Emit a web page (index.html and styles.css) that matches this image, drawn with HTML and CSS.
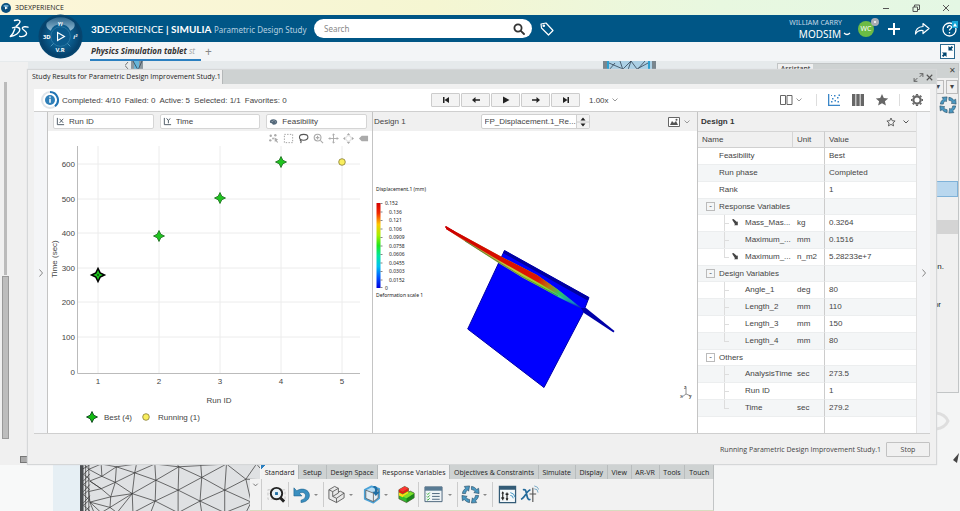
FILE: index.html
```html
<!DOCTYPE html>
<html lang="en">

<head>
    <meta charset="UTF-8">
    <meta name="viewport" content="width=device-width, initial-scale=1.0">
    <title>3DEXPERIENCE</title>
    <link rel="stylesheet" href="styles.css">
</head>

<body>
    <div class="titlebar">
        <svg class="app-icon" viewBox="0 0 10 10"><circle cx="5" cy="5" r="5" fill="#0b4f7d"/><path d="M2 3a4 4 0 0 1 6 0L5 5z" fill="#6aa9cf"/><path d="M4 3.500l3 1.500-3 1.500z" fill="#fff"/></svg>
        <span class="app-title">3DEXPERIENCE</span>
        <div class="window-buttons">
            <button aria-label="Minimize"><svg viewBox="0 0 10 10"><path d="M2 5.500h6"/></svg></button>
            <button aria-label="Restore"><svg viewBox="0 0 10 10"><path d="M2 4h4.500v4.500H2zM3.500 4V2h5v4.500h-2"/></svg></button>
            <button aria-label="Close"><svg viewBox="0 0 10 10"><path d="M2 2l6 6M8 2L2 8"/></svg></button>
        </div>
    </div>

    <header class="header">
        <svg class="ds-logo" viewBox="0 0 20 20" fill="none" stroke="#fff" stroke-width="1.400" stroke-linecap="round" stroke-linejoin="round">
            <path d="M5.500 1.500C8 .8 11 .8 11 2.400c0 1.800-1.800 3.200-3.800 4.800"/>
            <path d="M3.500 8.800c3.200-1.200 7.300-.8 7.300 2 0 3-4.500 6-9.500 6.700 2-1.800 3.700-4.700 4.600-7.700"/>
            <path d="M19 8.200c-2-.9-5.500-.6-5.700.9-.2 1.600 4.700 3 4.300 5.600-.3 2.300-4 3.500-7 2.600"/>
        </svg>
        <button class="compass" aria-label="Compass">
            <svg viewBox="0 0 46 46">
                <defs>
                    <radialGradient id="ball" cx="50%" cy="50%" r="52%"><stop offset="0" stop-color="#1b78a8"/><stop offset=".6" stop-color="#0a5888"/><stop offset="1" stop-color="#053d66"/></radialGradient>
                    <linearGradient id="cap" x1="0" y1="0" x2="0" y2="1"><stop offset="0" stop-color="#2c6489"/><stop offset="1" stop-color="#8db9d3"/></linearGradient>
                </defs>
                <circle cx="23" cy="23" r="22.500" fill="#06456f"/>
                <circle cx="23" cy="23" r="20.500" fill="url(#ball)"/>
                <path d="M9 9a20 20 0 0 1 28 0q2 5-4 8a11 11 0 0 0-20 0q-6-3-4-8z" fill="url(#cap)"/>
                <circle cx="23" cy="23" r="10" fill="#0a5a8c" stroke="#2e7ba6" stroke-width=".8"/>
                <path d="M13 33l3-3M33 33l-3-3" stroke="#4b94bb"/>
                <path d="M20 19l7 4-7 4z" fill="none" stroke="#fff" stroke-width="1.200"/>
                <text x="5" y="26">3D</text>
                <text x="18" y="39">V.R</text>
                <text x="36" y="26" font-style="italic">i&#178;</text>
                <text x="20" y="12" font-style="italic">Yi</text>
            </svg>
        </button>
        <div class="brand"><b>3D</b>EXPERIENCE <b>| SIMULIA</b> <span class="brand-app">Parametric Design Study</span></div>
        <div class="search">
            <input type="text" placeholder="Search" aria-label="Search">
            <button aria-label="Run search"><svg viewBox="0 0 12 12" fill="none" stroke="#333" stroke-width="1.800"><circle cx="5" cy="5" r="3.600"/><path d="M7.800 7.800L11 11" stroke-linecap="round"/></svg></button>
        </div>
        <button class="tag" aria-label="Tags"><svg viewBox="0 0 14 14" fill="none" stroke="#fff" stroke-width="1.200" stroke-linejoin="round"><path d="M1 2l5-1 7 7.500L8.500 13 1.500 6z"/><circle cx="3.800" cy="3.800" r=".7"/></svg></button>
        <div class="user">
            <span class="user-name">WILLIAM CARRY</span>
            <button class="user-space">MODSIM <svg viewBox="0 0 8 8" fill="none" stroke="#fff" stroke-width="1.200"><path d="M1 3q3 3 6 0"/></svg></button>
        </div>
        <div class="avatar">WC<i></i></div>
        <button class="head-btn" aria-label="Add"><svg viewBox="0 0 16 16" stroke="#fff" stroke-width="2"><path d="M8 2v12M2 8h12"/></svg></button>
        <button class="head-btn" aria-label="Share"><svg viewBox="0 0 16 16" fill="none" stroke="#fff" stroke-width="1.200" stroke-linejoin="round"><path d="M9 2.500l6 5-6 5V9.500C5.500 9 3 10.500 1.500 13 1.500 8.500 4.500 5.800 9 5.500z"/></svg></button>
        <button class="head-btn help" aria-label="Help"><svg viewBox="0 0 16 16" fill="none" stroke="#fff" stroke-width="1.300"><circle cx="7.500" cy="8.500" r="6.500"/><path d="M5.500 7c0-3 4-3 4-.7 0 1.500-2 1.500-2 3.200M7.500 11v1.500"/><path d="M10 0h6v7h-6z" fill="#18a7d8" stroke="none"/><path d="M13 2l2 3.500h-4z" fill="#fff" stroke="none"/></svg></button>
    </header>

    <nav class="tabrow">
        <a class="doc-tab" href="#">Physics Simulation tablet <span>st</span></a>
        <button class="add-tab" aria-label="New tab">+</button>
        <button class="shrink" aria-label="Reduce"><svg viewBox="0 0 14 14"><path d="M13 2.500L11.500 1 9.800 2.700 8 1v5h5l-1.700-1.800zM1 11.500L2.500 13l1.700-1.700L6 13V8H1l1.700 1.800z" fill="#00456f"/></svg></button>
    </nav>

    <main class="workspace">
        <!-- everything that shows behind the study window -->
        <div class="backdrop" aria-hidden="true">
            <div class="left-dock"><div class="scroll-track"></div><div class="scroll-thumb"></div><i class="grip"></i></div>
            <div class="left-view"></div>
            <svg class="strip-mesh strip-mesh-a" viewBox="0 0 18 9"><path d="M3 1L0 4.500 3 8" fill="none" stroke="#555" stroke-width=".8"/><path d="M6 0h12v9H6z" fill="#67b5d8"/><path d="M6 0h3v9H6zM14 0h4v9h-4z" fill="#8b979e"/><path d="M8 0l5 9 4-9" fill="none" stroke="#345" stroke-width=".8"/></svg>
            <svg class="strip-mesh" viewBox="0 0 53 9"><path d="M0 0h53v9H0z" fill="#acd0e5"/><path d="M0 0h4v9H0zM49 0h4v9h-4z" fill="#7a868e"/><path d="M4 0h2v9H4zM45 0h2v9h-2z" fill="#2c9fd0"/><path d="M6 2l14 6 8-8 6 8 11-6M6 9l6-7M20 9L17 0M28 0l-3 9M34 9l8-9" fill="none" stroke="#345" stroke-width=".8"/></svg>
            <svg class="mesh" viewBox="240 552 510 138" preserveAspectRatio="xMinYMin slice">
                <path d="M240 552h540v138H240z" fill="#dfe1e3"/>
                <path d="M240 552h10v138h-10z" fill="#4a4d50"/>
                <path d="M250 552l15 15-15 14 17 14-17 15 17 14-17 15 17 15-17 15 17 15-17 12M256 552v138M265 552v138M248 566l20-12M250 600l18-20M250 630l18-20M250 662l18-20M250 690l18-18" class="wire"/>
                <path d="M265 567L300 552 343 560 302 587 265 567M302 587L268 600 300 622 265 630M302 587L340 604 300 622 327 645 268 660 265 630M343 560L340 604 327 645 325 675 268 660M340 604L395 577 343 560 400 552 395 577 452 552 520 560 455 598 395 577 388 636 327 645M340 604L388 636 325 675 300 690 268 660 280 690M325 675L345 690 388 636 390 690M388 636L455 598 453 657 388 636M452 552L455 598 518 626 520 560 585 590 518 626 453 657 440 690M390 690L453 657 518 690 518 626 580 657 585 590 650 626 580 657 518 690M520 560L515 552M580 657L585 690M580 657L650 690 650 626 725 660 650 690M585 590L582 552M585 590L655 552 520 560M655 552L650 626 710 595 655 552M710 595L740 552 780 597 710 595 725 660 747 640M725 660l22 25M725 660l-15 30M725 660l22 0M725 660l5 30M300 552l2 35M300 622l-33-22" class="wire"/>
            </svg>
            <div class="assistant">
                <div class="assistant-bar"><span>Assistant</span><i>&#10005;</i></div>
                <div class="assistant-tools"><i>&#9662;</i><i>&#9662;</i></div>
                <svg class="cycle" viewBox="0 0 20 20"><use href="#cycle-arrows"/></svg>
                <div class="assistant-pick"></div>
                <div class="assistant-row"></div>
                <p>completion.</p>
                <p>or</p>
            </div>
            <svg class="corner-view" viewBox="0 0 24 60"><path d="M0 10q9 1 12 8-3 7-12 8" fill="none" stroke="#dedede" stroke-width="3"/><path d="M23 50l-6 7 4 3z" fill="#444"/></svg>
        </div>

        <section class="study">
            <div class="study-title">
                <h1>Study Results for Parametric Design Improvement Study.1</h1>
                <button aria-label="Maximize"><svg viewBox="0 0 10 10" fill="none" stroke="#555" stroke-width=".8"><path d="M6 1.500h3v3M9 1.500L6 4.500M4 8.500H1v-3M1 8.500l3-3"/></svg></button>
                <button aria-label="Close study"><svg viewBox="0 0 10 10" stroke="#555"><path d="M2.500 2.500l5 5M7.500 2.500l-5 5"/></svg></button>
            </div>

            <div class="study-bar">
                <div class="status">
                    <svg class="ring" viewBox="0 0 20 20"><circle cx="10" cy="10" r="8" fill="none" stroke="#dfe5ea" stroke-width="2"/><path d="M10 2a8 8 0 0 1 5 14.200" fill="none" stroke="#2074b4" stroke-width="2"/><circle cx="10" cy="10" r="5" fill="#2f7fb8"/><path d="M10 8.700v4M10 6.500v1.300" stroke="#fff" stroke-width="1.500"/></svg>
                    <span>Completed: 4/10</span><span>Failed: 0</span><span>Active: 5</span><span>Selected: 1/1</span><span>Favorites: 0</span>
                </div>
                <div class="player">
                    <button aria-label="First"><svg viewBox="0 0 10 10"><path d="M2 2h1.500v6H2zM8 2v6L3.500 5z"/></svg></button>
                    <button aria-label="Previous"><svg viewBox="0 0 10 10"><path d="M1 5l3.500-3v2.200H9v1.600H4.500V8z"/></svg></button>
                    <button aria-label="Play"><svg viewBox="0 0 10 10"><path d="M2 1.500L8.500 5 2 8.500z"/></svg></button>
                    <button aria-label="Next"><svg viewBox="0 0 10 10"><path d="M9 5L5.500 2v2.200H1v1.600h4.500V8z"/></svg></button>
                    <button aria-label="Last"><svg viewBox="0 0 10 10"><path d="M8 2H6.500v6H8zM2 2v6l4.500-3z"/></svg></button>
                </div>
                <select class="speed" aria-label="Speed"><option>1.00x</option></select>
                <svg class="chev" viewBox="0 0 8 8"><path d="M1.500 2.500L4 5l2.500-2.500"/></svg>
                <div class="views">
                    <button aria-label="Compare"><svg viewBox="0 0 14 14" fill="none" stroke="#666"><path d="M1.500 2.500h5v9h-5zM8 2.500h5v9H8z"/></svg></button>
                    <svg class="chev" viewBox="0 0 8 8"><path d="M1.500 2.500L4 5l2.500-2.500"/></svg>
                    <i class="sep"></i>
                    <button aria-label="Scatter plot"><svg viewBox="0 0 14 14" fill="#3a86c8"><path d="M1 1h1.300v10.700H13V13H1zM4 8h1.500v1.500H4zM5 5h1.500v1.500H5zM7.500 7H9v1.500H7.500zM7 2h1.500v1.500H7zM10 4h1.500v1.500H10zM10.500 8H12v1.500h-1.500zM11.500 1.500H13V3h-1.500zM4 2h1v1H4z"/></svg></button>
                    <button aria-label="Table"><svg viewBox="0 0 14 14" fill="#666"><path d="M1 1h3.400v12H1zM5.300 1h3.400v12H5.300zM9.600 1H13v12H9.600z"/></svg></button>
                    <button aria-label="Favorites"><svg viewBox="0 0 14 14" fill="#666"><path d="M7 1l1.800 4 4.400.4-3.300 2.900 1 4.300L7 10.300l-3.900 2.300 1-4.300L.8 5.400 5.200 5z"/></svg></button>
                    <i class="sep"></i>
                    <button aria-label="Settings"><svg viewBox="0 0 14 14" fill="none" stroke="#666"><circle cx="7" cy="7" r="3.600" stroke-width="2.200"/><path d="M7 1v1.500M7 11.500V13M1 7h1.500M11.500 7H13M2.800 2.800l1 1M10.200 10.200l1 1M11.200 2.800l-1 1M3.800 10.200l-1 1" stroke-width="2.200"/></svg></button>
                </div>
            </div>

            <div class="panels">
                <button class="rail rail-left" aria-label="Expand left"><svg viewBox="0 0 8 8"><path d="M2.500 .5L5.500 4l-3 3.500"/></svg></button>

                <div class="panel">
                    <div class="panel-head axes">
                        <label><svg viewBox="0 0 10 10" fill="none" stroke="#45525e"><path d="M1.500 1v7.500H9M4 2l4 4.500M8 2L4 6.500"/></svg><select aria-label="X axis"><option>Run ID</option></select></label>
                        <label><svg viewBox="0 0 10 10" fill="none" stroke="#45525e"><path d="M1.500 1v7.500H9M4 1.500l2 2.500 2-2.500M6 4v3"/></svg><select aria-label="Y axis"><option>Time</option></select></label>
                        <label><svg viewBox="0 0 10 10" fill="#53687a"><path d="M5 2.500C2 2.500.8 4 1 5.500c.2 1.300 1.500 1.200 2.200 1.500.5.200.3 1.500 1.800 1.500 3 0 4.300-1.500 4.100-3.200C8.900 3.500 7 2.500 5 2.500z"/><path d="M3 5h1M5 4h1M7 5.500h1" stroke="#fff" stroke-width=".6"/></svg><select aria-label="Color"><option>Feasibility</option></select></label>
                    </div>
                    <div class="plot-tools">
                        <button aria-label="Select points"><svg viewBox="0 0 12 12" fill="#aaa"><circle cx="3" cy="3" r="1.300"/><circle cx="8" cy="2.500" r="1.300"/><circle cx="2.500" cy="8" r="1.300"/><circle cx="5.500" cy="6" r="1"/><path d="M7 5l4 2-1.500.8L11 10l-1 .6-1.500-2L7.500 10z"/></svg></button>
                        <button aria-label="Box select"><svg viewBox="0 0 12 12" fill="none" stroke="#999" stroke-dasharray="1.500 1.500"><path d="M1.500 1.500h9v9h-9z"/></svg></button>
                        <button aria-label="Lasso"><svg viewBox="0 0 12 12" fill="none" stroke="#555" stroke-width="1.200"><ellipse cx="6.200" cy="4.700" rx="4.600" ry="3.200"/><path d="M2.800 7c-1 1 .3 2 1 1.200M3.500 8.500L3 11"/></svg></button>
                        <button aria-label="Zoom"><svg viewBox="0 0 12 12" fill="none" stroke="#aaa" stroke-width="1.200"><circle cx="5" cy="5" r="3.700"/><path d="M8 8l3 3M3 5h4M5 3v4"/></svg></button>
                        <button aria-label="Pan"><svg viewBox="0 0 12 12" fill="none" stroke="#aaa"><path d="M6 1v10M1 6h10M4.700 2.300L6 1l1.300 1.300M4.700 9.700L6 11l1.300-1.300M2.300 4.700L1 6l1.300 1.300M9.700 4.700L11 6 9.700 7.300"/></svg></button>
                        <button aria-label="Fit"><svg viewBox="0 0 12 12" fill="#aaa"><path d="M6 0l2 2.500H4zM6 12l2-2.500H4zM0 6l2.500-2v4zM12 6L9.500 4v4z"/><circle cx="6" cy="6" r="3" fill="none" stroke="#ddd"/></svg></button>
                        <button aria-label="Label"><svg viewBox="0 0 12 12" fill="#aaa"><path d="M1 6l3-3h7v6H4z"/></svg></button>
                    </div>
                    <svg class="plot" viewBox="0 0 324 287" role="img" aria-label="Time by run">
                        <defs><path id="star" d="M0-5.500L1.800-1.800 5.500 0 1.800 1.800 0 5.500-1.800 1.800-5.500 0-1.800-1.800z"/></defs>
                        <path class="grid" d="M30 18h282M30 53h282M30 87h282M30 122h282M30 156h282M30 191h282M50 0v227M111 0v227M172 0v227M233 0v227M294 0v227"/>
                        <path class="axis" d="M29.500 0v227.500H312"/>
                        <g text-anchor="end">
                            <text x="27" y="21">600</text><text x="27" y="56">500</text><text x="27" y="90">400</text><text x="27" y="125">300</text>
                            <text x="27" y="159">200</text><text x="27" y="194">100</text><text x="27" y="229">0</text>
                        </g>
                        <g text-anchor="middle">
                            <text x="50" y="238">1</text><text x="111" y="238">2</text><text x="172" y="238">3</text><text x="233" y="238">4</text><text x="294" y="238">5</text>
                            <text x="171" y="257">Run ID</text>
                            <text transform="translate(9 113) rotate(-90)">Time (sec)</text>
                        </g>
                        <g fill="#1fc41f" stroke="#18691b" stroke-width=".8">
                            <use href="#star" x="111" y="90"/><use href="#star" x="172" y="52"/><use href="#star" x="233" y="16"/>
                        </g>
                        <use href="#star" transform="translate(50 129) scale(1.200)" fill="#1fc41f" stroke="#000" stroke-width="1.200"/>
                        <circle cx="50" cy="129" r=".8"/>
                        <circle cx="294" cy="16" r="3.300" fill="#f9ee5e" stroke="#857b36" stroke-width=".8"/>
                        <use href="#star" x="44" y="271" fill="#11bb11" stroke="#031" stroke-width=".8"/>
                        <text x="56" y="274">Best (4)</text>
                        <circle cx="98" cy="271" r="3.300" fill="#f9ee5e" stroke="#857b36" stroke-width=".8"/>
                        <text x="110" y="274">Running (1)</text>
                    </svg>
                </div>

                <div class="panel">
                    <div class="panel-head result">
                        <span>Design 1</span>
                        <div class="result-pick">
                            <select aria-label="Result"><option>FP_Displacement.1_Re...</option></select>
                            <button aria-label="Change result"><svg viewBox="0 0 12 12"><path d="M6 1.500L8.500 4.500h-5zM6 10.500L3.500 7.500h5z"/><path d="M0 6h12" stroke="#ccc"/></svg></button>
                        </div>
                        <button class="snap" aria-label="Snapshot"><svg viewBox="0 0 12 12"><path d="M.5 1.500h11v9H.5z" fill="#fff" stroke="#666"/><path d="M2 9l2-4 2 2 2-2 2 4z" fill="#555"/><circle cx="8.500" cy="3.800" r="1" fill="#555"/></svg></button>
                        <svg class="chev" viewBox="0 0 8 8"><path d="M1.500 2.500L4 5l2.500-2.500"/></svg>
                    </div>
                    <svg class="model" viewBox="0 0 324 302" role="img" aria-label="Displacement result">
                        <defs>
                            <linearGradient id="scale" x1="0" y1="0" x2="0" y2="1">
                                <stop offset="0" stop-color="#d40000"/><stop offset=".12" stop-color="#f22a00"/><stop offset=".25" stop-color="#ffc800"/><stop offset=".38" stop-color="#a6f000"/><stop offset=".5" stop-color="#1ee61e"/><stop offset=".62" stop-color="#00e6a0"/><stop offset=".75" stop-color="#00bff2"/><stop offset=".88" stop-color="#0050ff"/><stop offset="1" stop-color="#0000dc"/>
                            </linearGradient>
                            <linearGradient id="beam" gradientUnits="userSpaceOnUse" x1="73" y1="96" x2="210" y2="180">
                                <stop offset="0" stop-color="#c00"/><stop offset=".66" stop-color="#e01800"/><stop offset=".74" stop-color="#b87a10"/><stop offset=".82" stop-color="#2ec860"/><stop offset=".92" stop-color="#1488c8"/><stop offset="1" stop-color="#0000c0"/>
                            </linearGradient>
                            <linearGradient id="edge" gradientUnits="userSpaceOnUse" x1="73" y1="96" x2="210" y2="180">
                                <stop offset="0" stop-color="#c00"/><stop offset=".2" stop-color="#c89030"/><stop offset=".5" stop-color="#c8c838"/><stop offset=".72" stop-color="#90d820"/><stop offset=".84" stop-color="#28c8a0"/><stop offset="1" stop-color="#0000c0"/>
                            </linearGradient>
                        </defs>
                        <path d="M131.500 119.500L216 166.500 210 182 171 256.500 94.700 198z" fill="#00f" stroke="#0000a8" stroke-width="1"/>
                        <path d="M131.500 119.500L216 166.500l-1.500 3L130 122z" fill="#0000a0"/>
                        <path d="M73 95.500L128 125.500 164 144 184 158 211 179 185 166 167 156 150 147 127 133 73 98z" fill="url(#edge)"/>
                        <path d="M73 95.500L128 125.500 164 144 184 158 211 179 184 163 166 152 150 143 127 130 73 98z" fill="url(#beam)"/>
                        <path d="M92 110l35 22 23 14 17 9 18 10" fill="none" stroke="#1a7a40" stroke-width=".6"/>
                        <path d="M73 96l8 5" fill="none" stroke="#c00" stroke-width="2" stroke-linecap="round"/>
                        <path d="M208 177l5 0 28.500 23-1 1.500L211 182z" fill="#0000a8"/>
                        <path d="M3.500 72h4v85h-4z" fill="url(#scale)"/>
                        <path d="M7.500 72.500h2M7.500 81h2M7.500 89.500h2M7.500 98h2M7.500 106.500h2M7.500 115h2M7.500 123.500h2M7.500 132h2M7.500 140.500h2M7.500 149h2M7.500 156.500h2" stroke="#555" stroke-width=".7"/>
                        <text x="3" y="60">Displacement.1 (mm)</text>
                        <text x="12" y="74">0.152</text><text x="16" y="83">0.136</text><text x="16" y="91">0.121</text><text x="16" y="100">0.106</text><text x="16" y="108">0.0909</text><text x="16" y="117">0.0758</text><text x="16" y="125">0.0606</text><text x="16" y="134">0.0455</text><text x="16" y="142">0.0303</text><text x="16" y="151">0.0152</text><text x="12" y="159">0</text>
                        <text x="3" y="166">Deformation scale 1</text>
                        <path d="M313 263v-7M313 263l-4 3M313 263l5 2" fill="none" stroke="#777" stroke-width=".8"/>
                        <text x="311" y="258">z</text><text x="307" y="267">x</text><text x="316" y="267">y</text>
                    </svg>
                </div>

                <div class="panel details">
                    <div class="panel-head details-head">
                        <h2>Design 1</h2>
                        <button aria-label="Mark favorite"><svg viewBox="0 0 10 10" fill="none" stroke="#555" stroke-width=".9"><path d="M5 1l1.200 2.700 2.900.3-2.200 2 .7 2.900L5 7.400 2.400 8.900 3.100 6 .9 4l2.900-.3z"/></svg></button>
                        <button aria-label="Collapse"><svg viewBox="0 0 10 10" fill="none" stroke="#555"><path d="M2.500 3.500L5 6l2.500-2.500"/></svg></button>
                    </div>
                    <table>
                        <thead><tr><th>Name</th><th>Unit</th><th>Value</th></tr></thead>
                        <tbody>
                            <tr><td>Feasibility</td><td></td><td>Best</td></tr>
                            <tr><td>Run phase</td><td></td><td>Completed</td></tr>
                            <tr><td>Rank</td><td></td><td>1</td></tr>
                            <tr class="group"><td><button>-</button>Response Variables</td><td></td><td></td></tr>
                            <tr class="child"><td><svg viewBox="0 0 8 8"><path d="M1 1.500l1.500-.5 3.500 3 .8-.8v4H3l1-1z"/></svg>Mass_Mas...</td><td>kg</td><td>0.3264</td></tr>
                            <tr class="child"><td>Maximum_...</td><td>mm</td><td>0.1516</td></tr>
                            <tr class="child last"><td><svg viewBox="0 0 8 8"><path d="M1 1.500l1.500-.5 3.500 3 .8-.8v4H3l1-1z"/></svg>Maximum_...</td><td>n_m2</td><td>5.28233e+7</td></tr>
                            <tr class="group"><td><button>-</button>Design Variables</td><td></td><td></td></tr>
                            <tr class="child"><td>Angle_1</td><td>deg</td><td>80</td></tr>
                            <tr class="child"><td>Length_2</td><td>mm</td><td>110</td></tr>
                            <tr class="child"><td>Length_3</td><td>mm</td><td>150</td></tr>
                            <tr class="child last"><td>Length_4</td><td>mm</td><td>80</td></tr>
                            <tr class="group"><td><button>-</button>Others</td><td></td><td></td></tr>
                            <tr class="child"><td>AnalysisTime</td><td>sec</td><td>273.5</td></tr>
                            <tr class="child"><td>Run ID</td><td></td><td>1</td></tr>
                            <tr class="child last"><td>Time</td><td>sec</td><td>279.2</td></tr>
                        </tbody>
                    </table>
                    <div class="table-rest"></div>
                </div>

                <button class="rail" aria-label="Expand right"><svg viewBox="0 0 8 8"><path d="M2.500 .5L5.500 4l-3 3.500"/></svg></button>
            </div>

            <div class="study-foot">
                <span>Running Parametric Design Improvement Study.1</span>
                <button>Stop</button>
            </div>
        </section>

        <div class="ribbon">
            <div class="ribbon-tabs">
                <button class="active first">Standard</button>
                <button>Setup</button>
                <button>Design Space</button>
                <button class="active">Response Variables</button>
                <button>Objectives &amp; Constraints</button>
                <button>Simulate</button>
                <button>Display</button>
                <button>View</button>
                <button>AR-VR</button>
                <button>Tools</button>
                <button>Touch</button>
            </div>
            <div class="ribbon-body">
                <button class="ribbon-fold" aria-label="Fold"><svg viewBox="0 0 8 8"><path d="M1.500 2.500L4 5l2.500-2.500"/></svg></button>
                <button class="tool" aria-label="Find"><svg viewBox="0 0 20 20" fill="none"><path d="M1 5h18v10H1z" stroke="#bbb" stroke-width=".8" stroke-dasharray="3 2"/><circle cx="10" cy="9" r="6" fill="#e9f2f7" stroke="#222" stroke-width="2"/><path d="M14 13.500l4 4" stroke="#222" stroke-width="3"/><path d="M8.500 7.500h3v3h-3z" fill="#1c6ea4"/></svg></button>
                <i class="sep"></i>
                <button class="tool" aria-label="Undo"><svg viewBox="0 0 20 20"><path d="M2 3v8.500h8.500L7.800 8.800C10.500 7 14 8 14.200 11c.2 2.500-1.500 4-4.700 5v2.500c6-.7 9-4 8.800-8C18 5 11 2.300 5 6z" fill="#3a8fc0" stroke="#1c5f8a" stroke-width=".6"/></svg></button>
                <button class="caret" aria-label="Undo list"></button>
                <i class="sep"></i>
                <button class="tool" aria-label="Part"><svg viewBox="0 0 20 20" stroke="#555" stroke-width=".9" stroke-linejoin="round"><path d="M2 5l6-3.500 4 2v4l2-1 4 2v5l-8 5-8-4z" fill="#e8e8e8"/><path d="M2 5l4 2v5l4 2v4.500M6 7l6-3.500M6 12l6-3.500V7.500M10 14l8-5.500" fill="none"/></svg></button>
                <button class="caret" aria-label="Part list"></button>
                <i class="gap"></i>
                <button class="tool" aria-label="Import"><svg viewBox="0 0 20 20" stroke="#2a6f9c" stroke-linejoin="round"><path d="M3 5l7-3.500 8 2.500v10l-6 4.500-9-4z" fill="#b9ddf2" stroke="#4ba3d8" stroke-width="2"/><path d="M4 5.500l8 3 5-4v9l-5 4-8-3.500z" fill="#e3edf3" stroke="#555" stroke-width=".8"/><path d="M12 8.500v9" stroke="#555" stroke-width=".8"/><path d="M12 1c4 0 5 2 4 6h3l-4.500 4.500L11 7h2.500c.5-3 0-4-1.500-4.500z" fill="#1f6fa5" stroke="none"/></svg></button>
                <button class="caret" aria-label="Import list"></button>
                <i class="gap"></i>
                <button class="tool" aria-label="Results"><svg viewBox="0 0 20 20" stroke-linejoin="round"><path d="M2 5l6-3.500 4 2v4l2-1 4 2v5l-8 5-8-4z" fill="#2ebc2e" stroke="#553" stroke-width=".8"/><path d="M2 5l6-3.500 4 2L6 7z" fill="#f33"/><path d="M2 5l4 2 6-3.500v2.500L6 9.500 2 7.500z" fill="#e61e12"/><path d="M2 8l4 2 6-3.500v3L6 13l-4-2z" fill="#fd1"/><path d="M10 14l8-5.500v5l-8 5z" fill="#1d841d"/><path d="M6 12l8-5 4 2-8 5z" fill="#7de02a"/></svg></button>
                <i class="sep"></i>
                <button class="tool tool-wide" aria-label="List"><svg viewBox="0 0 20 20"><path d="M1 2h18v15.500H1z" fill="#eef3f6" stroke="#49637a"/><path d="M1 2h18v4H1z" fill="#587a93"/><path d="M8.500 9h8M8.500 12h8M8.500 15h8" stroke="#49637a"/><path d="M3 9l1 1 2-2M3 12l1 1 2-2M3 15l1 1 2-2" fill="none" stroke="#3a3"/></svg></button>
                <button class="caret" aria-label="List options"></button>
                <i class="sep"></i>
                <button class="tool" aria-label="Update">
                    <svg viewBox="0 0 20 20">
                        <defs><path id="cycle-arrow" d="M1.500 9C1.800 6.500 3 4.800 4.800 3.500L3.500 1.500 9 1 8 6.500 6.800 5.200C5.500 6.200 5 7.500 4.800 9z"/></defs>
                        <g id="cycle-arrows" fill="#4a98c2" stroke="#2a4f66" stroke-width=".7"><use href="#cycle-arrow"/><use href="#cycle-arrow" transform="rotate(90 10 10)"/><use href="#cycle-arrow" transform="rotate(180 10 10)"/><use href="#cycle-arrow" transform="rotate(270 10 10)"/></g>
                    </svg>
                </button>
                <button class="caret" aria-label="Update list"></button>
                <i class="sep"></i>
                <button class="tool tool-wide" aria-label="Parameters"><svg viewBox="0 0 20 20"><path d="M1.500 1.500h17v17h-17z" fill="#f4f8fa" stroke="#335b76" stroke-width="1.300"/><path d="M2 2h16v3H2z" fill="#335b76"/><path d="M5 8v8M9.500 8v8" stroke="#222" stroke-width="1.200"/><path d="M3.500 9L5 6.500 6.500 9zM3.500 13h3v1.500h-3zM8 14l1.500 2.500L11 14zM8 9h3v1.500H8z" fill="#222"/><path d="M13 11a3 3 0 0 1 3 3M13 8a6 6 0 0 1 5 5" fill="none" stroke="#3a8fc0"/></svg></button>
                <button class="tool" aria-label="Variables"><svg viewBox="0 0 20 20" fill="none"><path d="M3 5c3-.5 3 0 4 5s2 6 4 5M11 5C7 6 5 14 1 15" stroke="#236a9a" stroke-width="1.800"/><path d="M13.500 3v15M10 9.500h7" stroke="#555" stroke-width="1.200"/><path d="M15 4a4 4 0 0 1 4 4M15 1a6 6 0 0 1 5 4" stroke="#77a9c6"/></svg></button>
            </div>
        </div>
    </main>
</body>

</html>
```

FILE: styles.css
```css
* {
    box-sizing: border-box;
}

body {
    margin: 0;
    min-height: 100vh;
    display: flex;
    flex-direction: column;
    font-family: "Liberation Sans", Arial, sans-serif;
    font-size: 8px;
    color: #444;
    background-color: #f4f5f5;
}

button,
select,
input {
    font: inherit;
    color: inherit;
    border: none;
    padding: 0;
    margin: 0;
    background: none;
}

select {
    appearance: none;
}

svg {
    display: block;
}

/* window title */
.titlebar {
    height: 15px;
    padding: 0 9px 0 1px;
    display: flex;
    align-items: center;
    background: linear-gradient(90deg, #fdf6d9, #f5f6d2 45%, #e8f8e0 75%, #e4f7e4);
}

.app-icon {
    width: 10px;
    height: 10px;
}

.app-title {
    margin-left: 4px;
    font-family: "Open Sans", sans-serif;
    font-size: 7px;
    color: #222;
}

.window-buttons {
    margin-left: auto;
    display: flex;
    gap: 20px;
}

.window-buttons svg {
    width: 10px;
    height: 10px;
    fill: none;
    stroke: #555;
}

/* blue header */
.header {
    height: 27px;
    padding: 0 2px 0 9px;
    display: flex;
    align-items: center;
    position: relative;
    background-color: #005686;
    color: #fff;
    font-family: "Noto Sans", sans-serif;
}

.ds-logo {
    width: 20px;
    height: 20px;
}

.compass {
    position: absolute;
    left: 38px;
    top: -1px;
    z-index: 2;
}

.compass svg {
    width: 45px;
    height: 45px;
}

.compass text {
    font-size: 6px;
    font-weight: bold;
    fill: #fff;
}

.brand {
    margin-left: 62px;
    width: 223px;
    font-family: Lato, sans-serif;
    font-size: 10px;
    white-space: nowrap;
}

.brand-app {
    font-family: "Noto Sans", sans-serif;
    font-size: 8px;
    color: #b5d0e0;
}

.search {
    width: 218px;
    height: 19px;
    padding: 0 7px 0 10px;
    border-radius: 10px;
    display: flex;
    background-color: #fff;
    color: #333;
}

.search input {
    flex: 1;
    min-width: 0;
    outline: none;
}

.search input::placeholder {
    color: #888;
}

.search svg {
    width: 12px;
    height: 12px;
}

.tag {
    margin-left: 8px;
}

.tag svg {
    width: 14px;
    height: 14px;
}

.user {
    margin-left: auto;
    display: flex;
    flex-direction: column;
    align-items: flex-end;
    line-height: 12px;
}

.user-name {
    margin-right: 9px;
    font-size: 7px;
    line-height: 10px;
    color: #c5dae7;
}

.user-space {
    display: flex;
    align-items: center;
    gap: 2px;
    font-size: 10px;
}

.user-space svg {
    width: 8px;
    height: 8px;
}

.avatar {
    width: 16px;
    height: 16px;
    margin: 0 12px 0 7px;
    border-radius: 50%;
    position: relative;
    background-color: #6cbb45;
    font-size: 7px;
    line-height: 16px;
    text-align: center;
}

.avatar i {
    position: absolute;
    top: -3px;
    right: -5px;
    width: 8px;
    height: 8px;
    border: 3px solid #a9acb4;
    border-radius: 50%;
    background-color: #fff;
}

.head-btn {
    margin-left: 12px;
}

.avatar + .head-btn {
    margin-left: 0;
}

.head-btn svg {
    width: 16px;
    height: 16px;
}

/* document tabs */
.tabrow {
    height: 19px;
    padding: 0 5px 0 90px;
    display: flex;
    align-items: center;
    background-color: #f3f5f7;
    font-family: "Noto Sans", sans-serif;
}

.doc-tab {
    height: 19px;
    width: 111px;
    padding-left: 1px;
    border-bottom: 2px solid #2a7fc0;
    overflow: hidden;
    white-space: nowrap;
    line-height: 18px;
    font-weight: bold;
    font-style: italic;
    color: #333;
    text-decoration: none;
}

.doc-tab span {
    font-weight: normal;
    color: #aaa;
}

.add-tab {
    margin-left: 4px;
    font-size: 12px;
    line-height: 16px;
    color: #888;
}

.shrink {
    margin-left: auto;
    width: 15px;
    height: 15px;
    border: 1px solid #2d6a90;
    background-color: #fff;
}

.shrink svg {
    width: 13px;
    height: 13px;
}

/* workspace */
.workspace {
    flex: 1;
    padding-top: 9px;
    display: flex;
    flex-direction: column;
    position: relative;
}

.backdrop {
    position: absolute;
    inset: 0;
    overflow: hidden;
    background: linear-gradient(#e6eaec 10px, #f4f5f5 10px);
}

.left-dock {
    position: absolute;
    left: 0;
    top: 1px;
    bottom: 46px;
    width: 28px;
    background-color: #f0f0f0;
}

.scroll-track {
    position: absolute;
    left: 4px;
    top: 20px;
    bottom: 190px;
    width: 3px;
    background-color: #bbb;
}

.scroll-thumb {
    position: absolute;
    left: 2px;
    bottom: 26px;
    width: 7px;
    height: 163px;
    border: 1px solid #999;
    background-color: #bdbdbd;
}

.grip {
    position: absolute;
    right: 0;
    bottom: 2px;
    width: 8px;
    height: 7px;
    border: 1px solid #777;
    background-color: #aaa;
}

.left-view {
    position: absolute;
    left: 0;
    bottom: 0;
    width: 80px;
    height: 46px;
    background: linear-gradient(90deg, #f8f9f9 53px, #e6eff4 53px);
}

.strip-mesh {
    position: absolute;
    left: 603px;
    top: 0;
    width: 53px;
    height: 9px;
}

.strip-mesh-a {
    left: 125px;
    width: 18px;
}

.mesh {
    position: absolute;
    left: 80px;
    bottom: 0;
    width: 180px;
    height: 47px;
}

.wire {
    fill: none;
    stroke: #333;
    stroke-width: 2;
}

.assistant {
    position: absolute;
    top: 2px;
    right: 1px;
    width: 182px;
    height: 330px;
    border: 1px solid #c2c5c6;
    background-color: #f0f0f0;
    text-align: right;
}

.assistant-bar {
    height: 14px;
    display: flex;
    justify-content: space-between;
    background-color: #ced2d2;
}

.assistant-bar span {
    width: 35px;
    background-color: #f0f0f0;
    text-align: center;
    font-family: "Noto Sans", sans-serif;
    font-size: 7px;
    color: #222;
}

.assistant-bar i {
    margin-right: 2px;
    font-style: normal;
    line-height: 14px;
}

.assistant-tools {
    margin: 2px 0;
    display: flex;
    justify-content: flex-end;
    gap: 2px;
}

.assistant-tools i {
    width: 12px;
    height: 14px;
    border: 1px solid #bbb;
    line-height: 12px;
    text-align: center;
    font-style: normal;
}

.cycle {
    width: 18px;
    height: 18px;
    margin: 0 1px 0 auto;
}

.assistant-pick {
    height: 16px;
    margin-top: 67px;
    border: 1px solid #7fb2d8;
    background-color: #b9d7ee;
}

.assistant-row {
    height: 14px;
    margin-top: 23px;
    background-color: #d4d4d4;
}

.assistant p {
    margin: 28px 14px 0 0;
    line-height: 10px;
    color: #222;
}

.assistant p + p {
    margin: 28px 17px 0 0;
}

.corner-view {
    position: absolute;
    right: 0;
    bottom: 48px;
    width: 24px;
    height: 60px;
}

/* study results window */
.study {
    flex: 1;
    margin: 0 24px 0 28px;
    position: relative;
    display: flex;
    flex-direction: column;
    background-color: #f0f0f0;
    box-shadow: 0 0 1px 1px #d5d7d8;
}

.study-title {
    height: 14px;
    padding-right: 1px;
    display: flex;
    align-items: center;
    background-color: #ced2d2;
}

.study-title h1 {
    margin: 0 auto 0 0;
    height: 14px;
    width: 195px;
    padding-left: 4px;
    border-right: 1px solid #b5b8b9;
    background-color: #f0f0f0;
    font-family: "Open Sans", sans-serif;
    font-size: 7px;
    font-weight: normal;
    line-height: 14px;
    white-space: nowrap;
    color: #222;
}

.study-title svg {
    width: 11px;
    height: 11px;
}

.study-bar {
    height: 22px;
    margin: 5px 6px 0;
    padding: 0 6px;
    display: flex;
    align-items: center;
    background-color: #fff;
}

.status {
    width: 391px;
    display: flex;
    align-items: center;
    gap: 4px;
    white-space: nowrap;
}

.ring {
    width: 20px;
    height: 20px;
    margin-right: -2px;
}

.player {
    display: flex;
    gap: 1px;
}

.player button {
    width: 29px;
    height: 14px;
    border: 1px solid #ccc;
    border-radius: 1px;
    background-color: #f3f3f3;
}

.player svg {
    width: 10px;
    height: 10px;
    margin: 0 auto;
    fill: #222;
}

.speed {
    margin-left: 9px;
}

.chev {
    width: 8px;
    height: 8px;
    margin: 0 2px;
    fill: none;
    stroke: #999;
}

.views {
    margin-left: auto;
    display: flex;
    align-items: center;
    gap: 10px;
}

.views svg {
    width: 14px;
    height: 14px;
}

.views .chev {
    width: 8px;
    height: 8px;
    margin: 0 3px 0 -8px;
}

.sep {
    width: 1px;
    height: 12px;
    background-color: #ddd;
}

.panels {
    flex: 1;
    margin: 0 6px;
    border: solid #cfcfcf;
    border-width: 1px 0;
    display: grid;
    grid-template-columns: 14px 1fr 1fr 219px 13px;
    background-color: #fff;
}

.rail {
    background-color: #f4f5f7;
}

.rail-left {
    border-right: 1px solid #c4c4c4;
}

.rail svg {
    width: 8px;
    height: 8px;
    margin: 0 auto;
    fill: none;
    stroke: #888;
}

.panel {
    min-width: 0;
    border-right: 1px solid #c4c4c4;
    display: flex;
    flex-direction: column;
}

.panel-head {
    height: 19px;
    display: flex;
    align-items: center;
    background-color: #f0f0f0;
}

.axes {
    padding: 0 5px;
    gap: 6px;
}

.axes label {
    flex: 1;
    height: 15px;
    padding-left: 2px;
    border: 1px solid #d5d5d5;
    border-radius: 2px;
    display: flex;
    align-items: center;
    gap: 4px;
    background-color: #fff;
}

.axes svg {
    width: 9px;
    height: 9px;
}

.axes select {
    flex: 1;
    min-width: 0;
}

.plot-tools {
    height: 15px;
    padding-right: 3px;
    display: flex;
    justify-content: flex-end;
    align-items: center;
    gap: 4px;
}

.plot-tools svg {
    width: 11px;
    height: 11px;
}

.plot,
.model {
    width: 100%;
}

.plot text {
    font-size: 8px;
    fill: #444;
}

.grid {
    stroke: #ececec;
}

.axis {
    fill: none;
    stroke: #bbb;
}

.result {
    padding: 0 4px 0 1px;
}

.result-pick {
    height: 15px;
    margin: 0 auto 0 75px;
    display: flex;
    border: 1px solid #d0d0d0;
    border-radius: 2px;
    background-color: #fff;
}

.result-pick select {
    width: 94px;
    padding-left: 3px;
}

.result-pick button {
    border-left: 1px solid #d0d0d0;
    background-color: #f3f3f3;
}

.result-pick svg {
    width: 12px;
    height: 12px;
    fill: #222;
}

.snap svg {
    width: 12px;
    height: 12px;
}

.result .chev {
    margin: 0 2px 0 3px;
}

.model text {
    font-family: "Noto Sans", sans-serif;
    font-size: 5px;
    fill: #222;
}

/* design details */
.details {
    border-right-color: #e2e2e2;
}

.details-head {
    padding: 0 5px 0 3px;
    gap: 5px;
}

.details-head h2 {
    margin: 0 auto 0 0;
    font-size: 8px;
    color: #333;
}

.details-head svg {
    width: 10px;
    height: 10px;
}

table {
    width: 100%;
    table-layout: fixed;
    border-collapse: separate;
    border-spacing: 0;
}

th,
td {
    height: 17px;
    padding: 0 0 0 4px;
    border-bottom: 1px solid #eceeef;
    text-align: left;
    line-height: 10px;
    white-space: nowrap;
}

th {
    border-top: 1px solid #d5d5d5;
    border-bottom-color: #d0d0d0;
    background-color: #f0f0f0;
    font-weight: normal;
}

th:nth-child(1) {
    width: 95px;
    border-right: 1px solid #d5d5d5;
}

th:nth-child(2) {
    width: 31px;
}

th:nth-child(3),
td:nth-child(3) {
    border-left: 1px solid #ccc;
}

td:first-child {
    padding-left: 21px;
}

tbody tr:nth-child(even) {
    background-color: #f4f6f7;
}

.group td {
    height: 16px;
}

.group td:first-child {
    padding-left: 8px;
    overflow: visible;
}

.group button {
    width: 9px;
    height: 9px;
    margin-right: 4px;
    border: 1px solid #bbb;
    line-height: 6px;
    vertical-align: middle;
}

.child td:first-child {
    padding-left: 47px;
    background: linear-gradient(#ddd, #ddd) 26px 0 / 1px 100% no-repeat, linear-gradient(#ddd, #ddd) 26px 8px / 5px 1px no-repeat;
}

.child.last td:first-child {
    background-size: 1px 9px, 5px 1px;
}

.child svg {
    float: left;
    width: 8px;
    height: 8px;
    margin-left: -14px;
    fill: #444;
}

.table-rest {
    flex: 1;
    margin-left: 126px;
    border-left: 1px solid #ccc;
}

.study-foot {
    height: 30px;
    padding: 0 6px;
    display: flex;
    align-items: center;
    justify-content: flex-end;
    gap: 5px;
    font-family: "Open Sans", sans-serif;
}

.study-foot span {
    font-size: 7px;
}

.study-foot button {
    width: 44px;
    height: 15px;
    border: 1px solid #c2c2c2;
    border-radius: 1px;
    font-size: 7px;
}

/* bottom ribbon */
.ribbon {
    width: 464px;
    margin: 1px 0 0 250px;
    position: relative;
}

.ribbon-tabs {
    height: 14px;
    margin-left: 11px;
    display: flex;
    font-family: "Open Sans", sans-serif;
    font-size: 7px;
}

.ribbon-tabs button {
    flex: 1 1 auto;
    border-right: 1px solid #b8bcbd;
    background-color: #ced2d2;
    color: #222;
    white-space: nowrap;
}

.ribbon-tabs .active {
    background-color: #f2f2f2;
}

.ribbon-tabs .first {
    background-image: linear-gradient(135deg, #2a7fc0 3px, transparent 3px);
}

.ribbon-body {
    height: 32px;
    border-right: 1px solid #c2c5c6;
    border-bottom: 1px solid #d8dcc0;
    display: flex;
    align-items: center;
    background-color: #f2f2f2;
}

.ribbon-fold {
    align-self: stretch;
    width: 12px;
    margin-right: 4px;
    padding: 2px;
    border-right: 1px solid #ccc;
    display: flex;
}

.ribbon-fold svg {
    width: 8px;
    height: 8px;
    fill: none;
    stroke: #666;
}

.tool {
    width: 20px;
}

.tool-wide {
    width: 24px;
}

.tool svg {
    width: 19px;
    height: 19px;
    margin: 0 auto;
}

.caret {
    width: 10px;
}

.caret::before {
    content: "";
    display: block;
    width: 0;
    margin: 0 auto;
    border: 2px solid transparent;
    border-top-color: #888;
    border-bottom: none;
}

.ribbon .sep {
    height: 25px;
    margin: 0 2px;
    background-color: #ccc;
}

.gap {
    width: 5px;
}
```
